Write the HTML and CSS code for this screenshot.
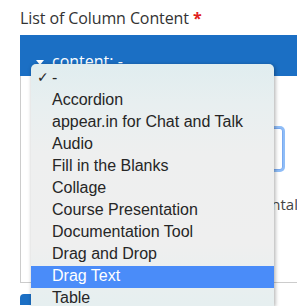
FILE: index.html
```html
<!DOCTYPE html>
<html>
<head>
<meta charset="utf-8">
<link rel="stylesheet" href="styles.css">
</head>
<body>
<div class="field">
  <div class="label">List of Column Content <span class="req">*</span></div>
  <div class="group">
    <div class="group-head"><span class="caret"></span>content: -</div>
    <div class="group-body">
      <div class="input-row"><div class="input"></div></div>
      <div class="option-text">Alignment: Horizontal</div>
    </div>
  </div>
  <div class="add-btn"></div>
</div>
<div class="menu">
  <div class="item checked"><span class="check">✓</span>-</div>
  <div class="item">Accordion</div>
  <div class="item">appear.in for Chat and Talk</div>
  <div class="item">Audio</div>
  <div class="item">Fill in the Blanks</div>
  <div class="item">Collage</div>
  <div class="item">Course Presentation</div>
  <div class="item">Documentation Tool</div>
  <div class="item">Drag and Drop</div>
  <div class="item selected">Drag Text</div>
  <div class="item">Table</div>
</div>
</body>
</html>
```
FILE: styles.css
```css
html, body {
  margin: 0;
  padding: 0;
  background: #ffffff;
  overflow: hidden;
  width: 297px;
  height: 306px;
}
.field {
  padding: 8px 0 0 20px;
  font-family: "Open Sans", sans-serif;
  font-size: 16px;
  color: #333333;
}
.label {
  line-height: 20px;
  height: 20px;
  margin-bottom: 7px;
  white-space: nowrap;
  letter-spacing: -0.1px;
}
.req {
  color: #e0201c;
  font-weight: bold;
}
.group-head {
  background: #1b6fc4;
  color: #ffffff;
  height: 41px;
  box-sizing: border-box;
  padding: 11px 0 0 16px;
  line-height: 20px;
  display: flex;
  align-items: center;
  align-self: flex-start;
  white-space: nowrap;
}
.caret {
  width: 0;
  height: 0;
  border-left: 4px solid transparent;
  border-right: 4px solid transparent;
  border-top: 5px solid #ffffff;
  margin-right: 8px;
  margin-top: 2px;
}
.group-body {
  border-left: 1px solid #cccccc;
  border-bottom: 1px solid #cccccc;
  height: 207px;
  box-sizing: border-box;
  padding-top: 52px;
}
.input-row {
  display: flex;
  justify-content: flex-end;
  padding-right: 14px;
}
.input {
  width: 200px;
  height: 40px;
  border: 1px solid #7aaaf0;
  border-radius: 3px;
  box-shadow: 0 0 0 2px #8fbdf7;
  background: #ffffff;
}
.option-text {
  margin-top: 24px;
  text-align: right;
  white-space: nowrap;
  font-size: 15px;
  line-height: 20px;
  color: #444444;
  margin-right: -1px;
}
.add-btn {
  margin-top: 11px;
  width: 120px;
  height: 11px;
  background: #1b6fc4;
  border-radius: 4px 4px 0 0;
}
.menu {
  position: absolute;
  left: 31px;
  top: 64px;
  width: 243px;
  height: 242px;
  box-sizing: border-box;
  padding-top: 4px;
  overflow: hidden;
  border-radius: 5px 5px 0 0;
  background: linear-gradient(to bottom, #e0edef 0px, #e8eff0 40px, #eeefef 90px, #efefef 180px, #e6eff0 240px);
  box-shadow: 1px 1px 4px rgba(0, 0, 0, 0.35);
  font-family: "Liberation Sans", Arial, sans-serif;
  font-size: 16px;
  color: #262626;
}
.item {
  height: 22px;
  box-sizing: border-box;
  line-height: 19px;
  padding: 0 0 3px 21px;
  white-space: nowrap;
  position: relative;
}
.item.selected {
  background: #4a8cf9;
  color: #ffffff;
}
.check {
  position: absolute;
  left: 6px;
  top: 0;
  font-family: "DejaVu Sans", sans-serif;
  font-size: 14px;
}
```
